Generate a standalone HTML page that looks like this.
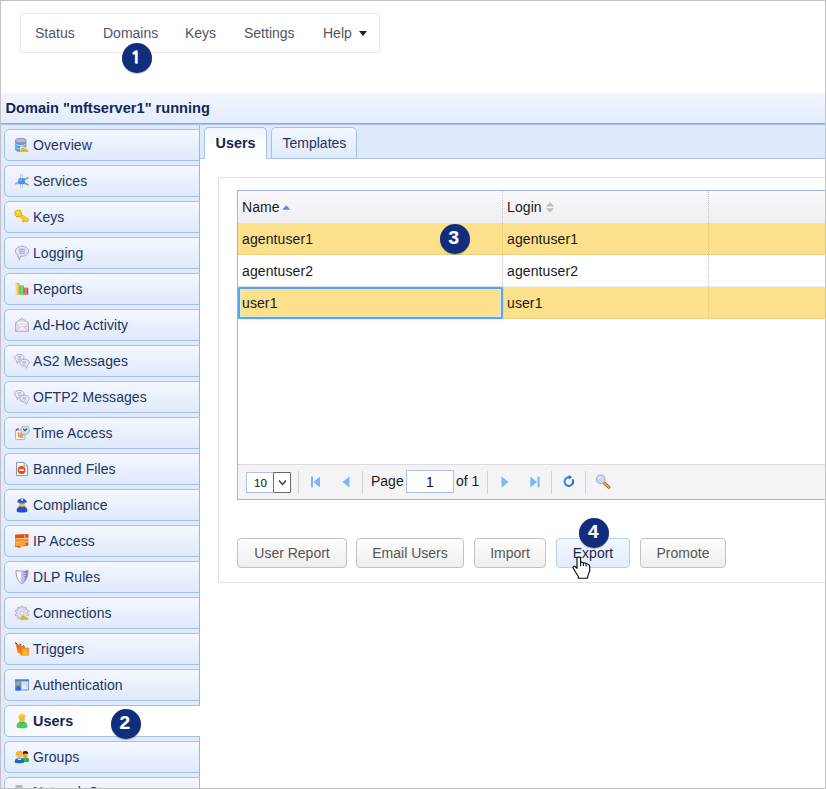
<!DOCTYPE html>
<html><head><meta charset="utf-8"><title>Users</title>
<style>
*{box-sizing:border-box}
html,body{margin:0;padding:0}
body{width:826px;height:789px;overflow:hidden;position:relative;background:#fff;font-family:"Liberation Sans",sans-serif;font-size:14px;color:#222}
.frame{position:absolute;left:0;top:0;width:826px;height:789px;border:1px solid #c2c2c2;z-index:50;pointer-events:none}
.nav{position:absolute;left:20px;top:13px;width:360px;height:40px;border:1px solid #e7e7ec;border-radius:2px;background:#fff}
.nav span{position:absolute;top:11px;color:#4f5563;font-size:14px;line-height:16px;white-space:nowrap}
.caret{position:absolute;left:338px;top:17px;width:0;height:0;border-left:4.500px solid transparent;border-right:4.500px solid transparent;border-top:5px solid #1c1c1c}
.title{position:absolute;left:1px;top:93px;width:824px;height:32px;background:linear-gradient(#f1f5fe,#e3ecfc);box-shadow:inset 0 -1px 0 #a9c2ee,inset 0 -2px 0 #89abe4;font-weight:bold;font-size:14.600px;color:#13295a;padding:7px 0 0 4.500px;line-height:17px;white-space:nowrap}
.side{position:absolute;left:1px;top:125px;width:199px;height:663px;background:#e0eafb;overflow:hidden}
.vline{position:absolute;left:198px;top:0;height:663px;width:1px;background:#a9b4c8}
.sb{position:absolute;left:3px;width:200px;height:32px;border:1px solid #a2c0ef;border-radius:5px 0 0 5px;background:linear-gradient(#f3f7fe,#e0eafb);color:#1c3460;font-size:14px;letter-spacing:.07px;line-height:16px;padding:7px 0 0 28px;white-space:nowrap}
.sb.sel{z-index:3;background:linear-gradient(90deg,#f3f7fe,#fff 45%);font-weight:bold;color:#14264f;font-size:14.400px}
.sb i{position:absolute;left:9px;top:7px;width:16px;height:16px;display:block}
.sb i svg{display:block;width:16px;height:16px}
.strip{position:absolute;left:200px;top:125px;width:625px;height:34px;background:#dfebfc;border-bottom:1px solid #a6c3f0}
.tab{position:absolute;top:127px;height:32px;border:1px solid #a2c0ef;border-radius:5px 5px 0 0;font-size:14px;line-height:16px;padding:7px 0 0 10.500px;color:#1c3460;background:linear-gradient(#f3f7fe,#e0eafb);white-space:nowrap}
.tab.sel{background:linear-gradient(#eef4fe,#fff 55%);border-bottom-color:#fff;font-weight:bold;color:#14264f;font-size:14.400px}
.content{position:absolute;left:200px;top:159px;width:625px;height:629px;background:#fff}
.box{position:absolute;left:218px;top:177px;width:620px;height:406px;border:1px solid #e0e0e0;background:#fff}
.grid{position:absolute;left:237px;top:190px;width:600px;height:310px;border:1px solid #a4b6d6;background:#fff}
.gh{position:absolute;left:0;top:0;width:100%;height:32px;background:linear-gradient(#fafafc,#eeeef3)}
.row{position:absolute;left:0;width:100%;height:32px;border-bottom:1px dotted rgba(0,0,0,.14)}
.row.hl{background:#fce08c}
.cell{position:absolute;top:0;height:100%;letter-spacing:.1px;font-size:14px;line-height:16px;padding:8px 0 0 4px;color:#1a1a1a;white-space:nowrap;border-right:1px dotted #c4c4c4}
.c1{left:0;width:265px}.c2{left:265px;width:206px}.c3{left:471px;width:200px;border-right:0}
.focus{position:absolute;left:-.500px;top:96.300px;width:265.500px;height:32px;border:2px solid #5aa2ee;border-radius:2px;box-shadow:0 0 2px rgba(120,180,250,.7),inset 0 0 0 1px rgba(215,235,235,.8)}
.pager{position:absolute;left:0;top:273px;width:100%;height:35px;background:#f4f4f7;border-top:1px solid #dcdce0}
.pager span{position:absolute;top:8px;font-size:14px;line-height:16px;color:#1a1a1a}
.sep{position:absolute;top:6px;width:1px;height:23px;background:#d2d2d6}
.pager svg{position:absolute}
.sel10{position:absolute;left:8px;top:7px;width:45px;height:21px;border:1px solid #a9c3ec;background:#fff;font-size:11.700px;line-height:14px;padding:3px 0 0 7px;color:#111}
.sel10 b{position:absolute;right:-1px;top:-1px;width:18px;height:21px;border:1px solid #6a6a6a;background:#fff;border-radius:1px}
.pin{position:absolute;left:168px;top:5px;width:48px;height:23px;border:1px solid #a9c3ec;background:#fff;font-size:14px;line-height:16px;text-align:center;padding-top:3px;color:#111}
.btn{position:absolute;top:538px;height:30px;border:1px solid #c3c3c3;border-radius:4px;background:linear-gradient(#fefefe,#ededed);font-size:14px;line-height:16px;color:#555;text-align:center;padding-top:6px;white-space:nowrap}
.btn.hover{background:linear-gradient(#f2f7ff,#e3edfc);border-color:#b6cff4;color:#1c2648}
.badge{position:absolute;width:30px;height:30px;border-radius:15px;background:#112e7e;color:#fff;font-weight:bold;font-size:19px;line-height:28.500px;padding-right:1.600px;text-align:center;z-index:20;-webkit-text-stroke:.2px #fff;box-shadow:0 1px 1px rgba(60,50,20,.35)}
.cursor{position:absolute;left:570px;top:555px;width:24px;height:26px;z-index:30}
</style></head><body>
<div class="nav">
<span style="left:14px">Status</span><span style="left:82px">Domains</span><span style="left:164px">Keys</span><span style="left:223px">Settings</span><span style="left:302px">Help</span><div class="caret"></div>
</div>
<div class="title">Domain "mftserver1" running</div>
<div class="strip"></div>
<div class="content"></div>
<div class="side">
<div class="sb" style="top:4px"><i><svg viewBox="0 0 16 16"><path d="M1.5 3.5v9.2c0 1.1 2.3 1.8 5.2 1.8s5.3-.7 5.3-1.8V3.5z" fill="#5d97e6" stroke="#8a8fc0" stroke-width=".8"/><path d="M1.8 7.2c1 1 3 1.3 5 1.3s4-.3 5-1.3" fill="none" stroke="#d8e6fa" stroke-width="1"/><path d="M1.8 10.4c1 1 3 1.3 5 1.3" fill="none" stroke="#c8dcf8" stroke-width="1"/><ellipse cx="6.8" cy="3.6" rx="5.3" ry="2.3" fill="#b9b7cf" stroke="#8d8aa8" stroke-width=".8"/><path d="M6.2 9.5h4l1 1h3.5v4H6.2z" fill="#f4f0e4"/><path d="M7 14.3c0-2 .8-3.6 2.2-3.600s1.800 1 2 2.000c.6-.8 1.500-.6 1.800.2l1.800 1.400z" fill="#e4bd16" stroke="#c89a10" stroke-width=".5"/></svg></i>Overview</div>
<div class="sb" style="top:40px"><i><svg viewBox="0 0 16 16"><path d="M7.600 1v14" stroke="#b9b9c4" stroke-width="2.4"/><path d="M7.600 1v14" stroke="#ececf2" stroke-width=".9"/><path d="M1.200 11l5-2.500" stroke="#a9a9b4" stroke-width="2"/><path d="M9.500 7l5-2.500M9.500 9.500l5 2.500" stroke="#9a9aa6" stroke-width="1.800"/><rect x="4.400" y="5.300" width="6.400" height="6" rx=".6" fill="#3d8ff0"/><rect x="5.200" y="6" width="3" height="2.400" fill="#79b4f6" opacity=".8"/></svg></i>Services</div>
<div class="sb" style="top:76px"><i><svg viewBox="0 0 16 16"><path d="M5.500 5.800l7.600 5.200" stroke="#d9a400" stroke-width="3.400" stroke-linecap="round"/><path d="M5.500 5.800l7.600 5.200" stroke="#f6d324" stroke-width="2.300" stroke-linecap="round"/><path d="M9.300 10.200l-1.300 2 1.600 1 .7-1.100 1 .7 1-1.600" fill="#f2cb1c" stroke="#d9a400" stroke-width=".6"/><rect x="1" y="1.200" width="6.400" height="6.600" rx="2.400" fill="#f6d324" stroke="#d9a400" stroke-width=".8" transform="rotate(-12 4 4.500)"/><circle cx="3.600" cy="3.800" r="1.200" fill="#fdf7d2" stroke="#e2b714" stroke-width=".4"/></svg></i>Keys</div>
<div class="sb" style="top:112px"><i><svg viewBox="0 0 16 16"><path d="M8 1.200c3.700 0 6.600 2.200 6.600 5s-2.900 5-6.600 5c-.5 0-1 0-1.500-.1L5.300 14.800 3.600 10.300C2.200 9.400 1.400 7.900 1.400 6.200c0-2.800 2.900-5 6.600-5z" fill="#e4e3f6" stroke="#a2a1c6" stroke-width="1"/><path d="M5 4.300h6M5 6.300h6M5 8.300h6" stroke="#9c97d8" stroke-width="1.100"/></svg></i>Logging</div>
<div class="sb" style="top:148px"><i><svg viewBox="0 0 16 16"><defs><linearGradient id="gy" x1="0" x2="1"><stop offset="0" stop-color="#fbe9a8"/><stop offset=".5" stop-color="#f7cf6a"/><stop offset="1" stop-color="#e9a83c"/></linearGradient><linearGradient id="gg" x1="0" x2="1"><stop offset="0" stop-color="#3cb54a"/><stop offset=".6" stop-color="#6ff08a"/><stop offset="1" stop-color="#35b24a"/></linearGradient><linearGradient id="gr" x1="0" x2="1"><stop offset="0" stop-color="#d8453c"/><stop offset=".6" stop-color="#ff8a80"/><stop offset="1" stop-color="#c42b2b"/></linearGradient></defs><rect x="1.200" y="2.200" width="4.300" height="11.600" fill="url(#gy)"/><rect x="5.400" y="4.600" width="4.300" height="9.200" fill="url(#gg)"/><rect x="9.600" y="6.800" width="4.200" height="7" fill="url(#gr)"/><path d="M1.700 2.400h3.400M5.900 4.800h3.400M10 7h3.400" stroke="#9a958a" stroke-width=".7" opacity=".7"/><path d="M13.700 7v6.800" stroke="#555" stroke-width=".6"/></svg></i>Reports</div>
<div class="sb" style="top:184px"><i><svg viewBox="0 0 16 16"><path d="M1.500 5.800L8 1.400l6.500 4.400v8.600h-13z" fill="#dcdbf6" stroke="#a6a4cc" stroke-width=".9"/><rect x="3.200" y="4.800" width="9.600" height="5" fill="#fff" stroke="#c9c5e4" stroke-width=".5"/><rect x="4.200" y="6" width="7.600" height="1.800" fill="#fbe3a0"/><path d="M1.800 14.100L8 8.600l6.200 5.500z" fill="#f1effc" stroke="#b8b4e0" stroke-width=".7"/><path d="M1.600 6.200l4.200 4M14.400 6.200l-4.200 4" stroke="#b8b4e0" stroke-width=".7"/></svg></i>Ad-Hoc Activity</div>
<div class="sb" style="top:220px"><i><svg viewBox="0 0 16 16"><path d="M5.400 1.400c2.700 0 4.600 1.500 4.600 3.400s-1.900 3.400-4.600 3.400c-.3 0-.6 0-.9-.1l-1.200 2.400-1.100-3.100c-1-.6-1.500-1.600-1.500-2.600 0-1.900 1.900-3.400 4.600-3.400z" fill="#efeefb" stroke="#9c9abc" stroke-width=".8"/><path d="M3.500 3.600h3.800M3.500 4.900h3.800M3.500 6.200h3.800" stroke="#aaa6da" stroke-width=".8"/><path d="M10.400 6.200c-2.700 0-4.600 1.500-4.600 3.400s1.900 3.400 4.600 3.400c.3 0 .6 0 .9-.1l1.200 2.400 1.100-3.100c1-.6 1.500-1.600 1.500-2.600 0-1.900-1.900-3.400-4.700-3.400z" fill="#efeefb" stroke="#9c9abc" stroke-width=".8"/><path d="M8.500 8.400h3.800M8.500 9.700h3.800M8.500 11h3.800" stroke="#aaa6da" stroke-width=".8"/></svg></i>AS2 Messages</div>
<div class="sb" style="top:256px"><i><svg viewBox="0 0 16 16"><path d="M5.400 1.400c2.700 0 4.600 1.500 4.600 3.400s-1.900 3.400-4.600 3.400c-.3 0-.6 0-.9-.1l-1.200 2.400-1.100-3.100c-1-.6-1.500-1.600-1.500-2.600 0-1.900 1.900-3.400 4.600-3.400z" fill="#efeefb" stroke="#9c9abc" stroke-width=".8"/><path d="M3.500 3.600h3.800M3.500 4.900h3.800M3.500 6.200h3.800" stroke="#aaa6da" stroke-width=".8"/><path d="M10.400 6.200c-2.700 0-4.600 1.500-4.600 3.400s1.900 3.400 4.600 3.400c.3 0 .6 0 .9-.1l1.200 2.400 1.100-3.100c1-.6 1.500-1.600 1.500-2.600 0-1.900-1.900-3.400-4.700-3.400z" fill="#efeefb" stroke="#9c9abc" stroke-width=".8"/><path d="M8.500 8.400h3.800M8.500 9.700h3.800M8.500 11h3.800" stroke="#aaa6da" stroke-width=".8"/></svg></i>OFTP2 Messages</div>
<div class="sb" style="top:292px"><i><svg viewBox="0 0 16 16"><rect x="1.400" y="5.400" width="9.600" height="9.200" rx=".8" fill="#f4f2fb" stroke="#a9a7c6" stroke-width=".9"/><path d="M2 5.600c.4-1.600 1.400-1.800 3-1.400" fill="none" stroke="#555" stroke-width="1.200"/><path d="M3.300 8.200h1.500v4M6.200 8.500h2.600v1.700h-2.400v1.800h3" fill="none" stroke="#f08a28" stroke-width="1.300"/><circle cx="11" cy="5.300" r="4.300" fill="#bfe6fa" stroke="#b8b8c2" stroke-width="1.100"/><path d="M9.200 3.800l1.800 1.800 2-2" fill="none" stroke="#3a4a6a" stroke-width="1.200"/></svg></i>Time Access</div>
<div class="sb" style="top:328px"><i><svg viewBox="0 0 16 16"><path d="M2.500 1.400h7.600l3.400 3.400v9.800h-11z" fill="#f8f9fd" stroke="#8795b6" stroke-width="1"/><path d="M10 1.600v3.300h3.300" fill="#dbe6fa" stroke="#8795b6" stroke-width=".8"/><circle cx="7.500" cy="9" r="3.900" fill="#ee4a12"/><rect x="5" y="8" width="5" height="2" rx=".4" fill="#fbe9e2"/></svg></i>Banned Files</div>
<div class="sb" style="top:364px"><i><svg viewBox="0 0 16 16"><path d="M3 14.500c-.3-3 .8-5 5-5s5.300 2 5 5c-1.500.9-8.500.9-10 0z" fill="#1f50d8" stroke="#1a3ea8" stroke-width=".5"/><ellipse cx="8" cy="7.200" rx="2.700" ry="2.800" fill="#f9b24a"/><path d="M5.200 9.300l2.800 1.300 2.800-1.300" fill="none" stroke="#8a5a1a" stroke-width=".7"/><path d="M3.200 5.200c.2-2.600 2.300-3.800 4.800-3.800s4.600 1.200 4.800 3.800c-1 1-8.600 1-9.600 0z" fill="#2554dc"/><path d="M4.600 5.600c1.700.8 5.100.8 6.800 0" stroke="#6a7a9a" stroke-width="1" fill="none"/><rect x="7.200" y="2" width="1.800" height="2" fill="#cfe2c8"/></svg></i>Compliance</div>
<div class="sb" style="top:400px"><i><svg viewBox="0 0 16 16"><path d="M1.300 1.800l13-.6v11.600l-13 1.400z" fill="#ec5a14"/><path d="M1.300 1.800l13-.6v3.800l-13 .6z" fill="#e8490e"/><path d="M1.600 5.800l12.400-.5M1.600 9.300l12.400-.6" stroke="#fde49a" stroke-width="1"/><path d="M8 5.600v3.400M5 9.300v3.600M11 9v3.400M10.800 1.600v3.600" stroke="#fbd070" stroke-width=".9"/><path d="M2 6.400h5.600v2.400H2zM8.600 6.100l5-.2v2.400l-5 .3z" fill="#f59a24"/><path d="M2 10h2.600v3l-2.600.3zM5.600 9.900h5v2.800l-5 .5z" fill="#f7a82c"/><path d="M3.500 14.200h3" stroke="#7a4a5a" stroke-width=".8"/></svg></i>IP Access</div>
<div class="sb" style="top:436px"><i><svg viewBox="0 0 16 16"><defs><linearGradient id="gs" x1="0" x2="1"><stop offset="0" stop-color="#ddd8fb"/><stop offset=".5" stop-color="#9a90e0"/><stop offset="1" stop-color="#4d4694"/></linearGradient></defs><path d="M2 1.600c3.600.8 8.400.8 12 0 0 6-1.600 10.400-6 13.200C3.600 12 2 7.600 2 1.600z" fill="#fff" stroke="#8a8c9a" stroke-width=".9"/><path d="M6.600 2.300c2.400.3 5.200.1 6.900-.3-.1 5.600-1.500 9.600-5.500 12.200-1-.7-1.400-1.200-1.400-1.200z" fill="url(#gs)"/><path d="M8.500 5l4.600-1.200M8.500 7.300l4-1.100M8.500 9.600l3.200-1M8.500 11.800l2-1" stroke="#e8e4ff" stroke-width=".8"/></svg></i>DLP Rules</div>
<div class="sb" style="top:472px"><i><svg viewBox="0 0 16 16"><path d="M7.4 1.0L8.5 1.0L9.3 2.7L10.1 3.0L11.6 2.0L12.5 2.7L12.1 4.5L12.6 5.2L14.5 5.3L14.8 6.4L13.4 7.6L13.4 8.4L14.8 9.6L14.5 10.7L12.6 10.8L12.1 11.5L12.6 13.3L11.7 14.0L10.1 13.0L9.3 13.2L8.6 15.0L7.5 15.0L6.7 13.3L5.9 13.0L4.4 14.0L3.5 13.3L3.9 11.5L3.4 10.8L1.5 10.7L1.2 9.6L2.6 8.4L2.6 7.6L1.2 6.4L1.5 5.3L3.4 5.2L3.9 4.5L3.4 2.7L4.3 2.0L5.9 3.0L6.7 2.8z" fill="#dfdeec" stroke="#a19fc0" stroke-width=".8" stroke-linejoin="round"/><circle cx="8" cy="8" r="1.800" fill="#f2f2f8" stroke="#b5b3d0" stroke-width=".6"/><path d="M7 10.200h3.600l1 1h3v3.200H7z" fill="#eceaf0"/><path d="M7 14.300c0-2 .8-3.600 2.200-3.600s1.800 1 2 2c.6-.8 1.500-.6 1.800.2l1.800 1.400z" fill="#e4bd16" stroke="#c89a10" stroke-width=".5"/></svg></i>Connections</div>
<div class="sb" style="top:508px"><i><svg viewBox="0 0 16 16"><path d="M1.200 1.400l3.200 2.600 1.600-1.400 2.200 2.600 1.400-.8 1.800 2.400h3.400v7.800H6.800l-1-2.800-1.800.4z" fill="#f47a18"/><path d="M1.200 1.400l3 6 1-1.800 1.200 3.400 1-1.200z" fill="#ee5a2a"/><rect x="7.600" y="7.600" width="6.400" height="6.400" fill="#f7a420"/><rect x="9.200" y="9.200" width="4.400" height="4.400" fill="#f9c02a"/><path d="M1.200 1.400l2 1.800M6 2.600l1 1.200M9.400 4.400l1 1.200" stroke="#3a3a5a" stroke-width="1"/></svg></i>Triggers</div>
<div class="sb" style="top:544px"><i><svg viewBox="0 0 16 16"><rect x="1" y="2.400" width="14" height="11.200" rx=".8" fill="#5aa0f0"/><rect x="1" y="2.400" width="14" height="1.600" fill="#3f86e6"/><rect x="7.400" y="4.600" width="6.600" height="7.800" fill="#ececf0" stroke="#b0b0b8" stroke-width=".6"/><path d="M9 6.800h3.600v3.600" fill="none" stroke="#c6c6cc" stroke-width="1"/><circle cx="4" cy="6.400" r="1.700" fill="#f29a16"/><path d="M1.600 13.400c0-3 1-4.600 2.600-4.600s2.800 1.600 2.800 4.600z" fill="#2a6ee0"/></svg></i>Authentication</div>
<div class="sb" style="top:616px"><i><svg viewBox="0 0 16 16"><path d="M7.200 12.600c-.2-2.600.6-4 4-4s4.200 1.400 4 4c-1.200.8-6.800.8-8 0z" fill="#2eb83c"/><ellipse cx="11.200" cy="6.200" rx="2.400" ry="2.700" fill="#f0a02a"/><path d="M8.400 5.400c-.2-2.400 1-3.400 2.900-3.400s3.100.8 2.900 3c-1.400-.8-4.200-.8-5.800.4z" fill="#3a2210"/><path d="M.8 13.600c-.2-2.800.8-4.600 4.600-4.600s4.800 1.800 4.600 4.600c-1.400.9-7.800.9-9.200 0z" fill="#1f62d0"/><path d="M3.400 9.400h4l-.6 1.600H4z" fill="#e8eef8"/><ellipse cx="5.400" cy="6.200" rx="2.700" ry="3" fill="#f9b650"/><path d="M1.800 7c-.6-3.600 1-5.200 3.600-5.200s4 1.200 3.600 3.600c-1.400-1-3-1.400-4.400-1-1 1.400-1.800 2.200-2.800 2.600z" fill="#f1bd22"/></svg></i>Groups</div>
<div class="sb" style="top:652px;padding-top:5.600px"><i style="top:6px"><svg viewBox="0 0 16 16"><rect x="1.500" y="1" width="7" height="14" fill="#b4b8c8"/></svg></i>Network Storage</div>
<div class="vline"></div>
<div class="sb sel" style="top:580px"><i><svg viewBox="0 0 16 16"><path d="M3 14.200c-.3-3.200.8-5.400 5-5.400s5.300 2.200 5 5.400c-1.500 1-8.500 1-10 0z" fill="#4fce5a" stroke="#3aa848" stroke-width=".5"/><path d="M5.600 9.200l2.400 1.400 2.400-1.400" fill="none" stroke="#2f9a3c" stroke-width=".7"/><ellipse cx="8" cy="5.600" rx="2.900" ry="3.600" fill="#f9b256"/><path d="M4.200 5.400c-.4-3 1.400-4.600 3.800-4.600s4 1.200 3.800 3.600c-1.600-1.200-3.400-1.800-5.200-1.400-.8 1.400-1.400 2.200-2.400 2.400z" fill="#f6cf3a"/></svg></i>Users</div>
</div>
<div class="tab sel" style="left:204px;width:63px">Users</div>
<div class="tab" style="left:271px;width:86px">Templates</div>
<div class="box"></div>
<div class="grid">
 <div class="gh"><div class="cell c1">Name</div><div class="cell c2">Login</div><div class="cell c3"></div>
 <svg style="position:absolute;left:44px;top:13.500px" width="8.500" height="5.200" viewBox="0 0 8 5"><path d="M0 4.500L4 .2l4 4.300z" fill="#5b8fd6"/></svg>
 <svg style="position:absolute;left:308px;top:11px" width="8" height="11" viewBox="0 0 8 11"><path d="M0 4.500L4 0l4 4.500zM0 6.200h8l-4 4.500z" fill="#bdbdbd"/></svg>
 </div>
 <div class="row hl" style="top:32px"><div class="cell c1">agentuser1</div><div class="cell c2">agentuser1</div><div class="cell c3"></div></div>
 <div class="row" style="top:64px"><div class="cell c1">agentuser2</div><div class="cell c2">agentuser2</div><div class="cell c3"></div></div>
 <div class="row hl" style="top:96px"><div class="cell c1">user1</div><div class="cell c2">user1</div><div class="cell c3"></div></div>
 <div class="focus"></div>
 <div class="pager">
  <div class="sel10">10<b><svg style="left:3px;top:5px" width="11" height="9" viewBox="0 0 11 9"><path d="M2 2.500l3.500 4 3.500-4" fill="none" stroke="#333" stroke-width="1.300"/></svg></b></div>
  <div class="sep" style="left:60px"></div>
  <svg style="left:73px;top:11px" width="9" height="12" viewBox="0 0 9 12"><path d="M0 .5h2v11H0zM9 .5v11L2.500 6z" fill="#7cb8f0"/></svg>
  <svg style="left:104px;top:11px" width="8" height="12" viewBox="0 0 8 12"><path d="M7.500 .5v11L.5 6z" fill="#7cb8f0"/></svg>
  <div class="sep" style="left:124px"></div>
  <span style="left:133px">Page</span>
  <div class="pin">1</div>
  <span style="left:218px">of 1</span>
  <div class="sep" style="left:249px"></div>
  <svg style="left:263px;top:11px" width="8" height="12" viewBox="0 0 8 12"><path d="M.5 .5v11L7.500 6z" fill="#7cb8f0"/></svg>
  <svg style="left:292px;top:11px" width="10" height="12" viewBox="0 0 10 12"><path d="M7.500 .5h2v11h-2zM.3 .5v11L7 6z" fill="#7cb8f0"/></svg>
  <div class="sep" style="left:313px"></div>
  <svg style="left:324px;top:9px" width="14" height="15" viewBox="0 0 14 15"><defs><linearGradient id="rf" x1="0" x2="1"><stop offset="0" stop-color="#2590f4"/><stop offset="1" stop-color="#3a68ae"/></linearGradient></defs><path d="M10.400 5.200A4.300 4.300 0 1 1 7 3.300" fill="none" stroke="url(#rf)" stroke-width="2"/><path d="M6.800 .9l3.400 2.300-3.400 2.400z" fill="#3566ac"/></svg>
  <div class="sep" style="left:347px"></div>
  <svg style="left:357px;top:9px" width="17" height="17" viewBox="0 0 17 17"><path d="M9.600 9.400l4.200 3.700" stroke="#7a5a30" stroke-width="3.200" stroke-linecap="round"/><path d="M9.600 9.400l4.200 3.700" stroke="#f0a030" stroke-width="2" stroke-linecap="round"/><circle cx="5.800" cy="5.400" r="4.300" fill="#c2dcf9" stroke="#b2b4bc" stroke-width="1.200"/><path d="M3.200 4.800a2.800 2.800 0 0 1 2.600-2.200" stroke="#eef6ff" stroke-width="1.200" fill="none"/></svg>
 </div>
</div>
<div class="btn" style="left:237px;width:110px">User Report</div>
<div class="btn" style="left:356px;width:108px">Email Users</div>
<div class="btn" style="left:474px;width:72px">Import</div>
<div class="btn hover" style="left:556px;width:74px">Export</div>
<div class="btn" style="left:640px;width:86px">Promote</div>
<div class="badge" style="left:121.500px;top:42.500px;font-family:'NanumGothic','Liberation Sans',sans-serif;font-weight:400;-webkit-text-stroke:1.400px #fff;font-size:16.500px;line-height:28px;padding-right:1.400px">1</div>
<div class="badge" style="left:110.700px;top:708.700px">2</div>
<div class="badge" style="left:439.700px;top:224.200px">3</div>
<div class="badge" style="left:579.100px;top:517.600px">4</div>
<svg class="cursor" viewBox="0 0 24 26"><path d="M7 2.800c0-.9 3.600-.9 3.600 0v4.700c.6-.6 2.800-.4 2.800.6.600-.5 2.700-.2 2.700.8.700-.4 3.600.6 3.600 2.400v4.600c0 1.200-.9 1.600-1.200 2.600l-1 4.700H8.400v-1.400L3.200 13.200c-.6-1 .2-2.400 1.800-1.800L7 13.400z" fill="#fff" stroke="#000" stroke-width="1.100" stroke-linejoin="round"/><path d="M10.600 7.500v3.500M13.400 8.300v2.700M16.100 9.200v2.300" stroke="#000" stroke-width="1.100"/></svg>
<div class="frame"></div>
</body></html>
